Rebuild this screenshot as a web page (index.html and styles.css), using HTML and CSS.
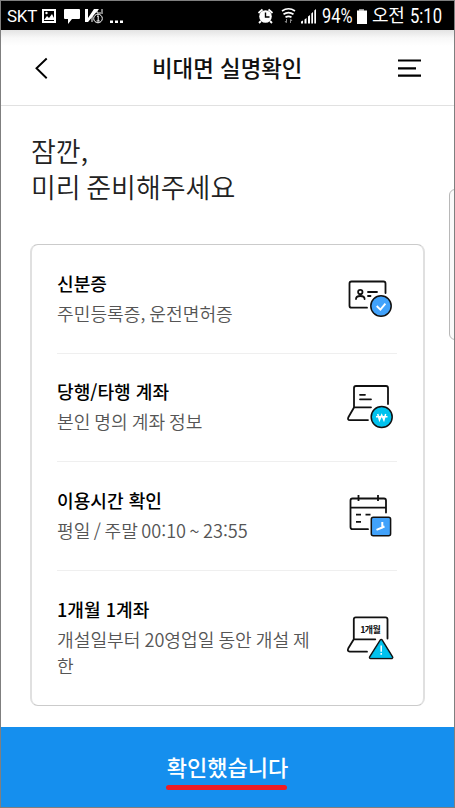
FILE: index.html
```html
<!DOCTYPE html>
<html lang="ko">
<head>
<meta charset="utf-8">
<title>비대면 실명확인</title>
<link rel="stylesheet" href="styles.css">
</head>
<body>
<div class="screen">
  <div class="status">
    <span class="carrier">SKT</span>
    <svg class="notices" width="84" height="20" viewBox="40 5 84 20">
      <path fill="#fff" fill-rule="evenodd" d="M42 8h14v14H42zM44 10v10h10V10z"/>
      <path fill="#fff" d="M44 19l3-4 2 2 3-4 3 6z"/><circle cx="46.5" cy="12" r="1.2" fill="#fff"/>
      <path fill="#fff" d="M65 8h14q1 0 1 1v8q0 1-1 1h-7l-4 5v-5h-3q-1 0-1-1V9q0-1 1-1z"/>
      <path fill="#fff" d="M85 8h3v9l6-9h5L88 21h-3z"/>
      <circle cx="98" cy="17.5" r="4.3" fill="#000" stroke="#fff"/><path d="M97 15.5l1.2-.8v5.500M96.500 20h3.300M92 15v6M97 9v3h4M102 8v5" fill="none" stroke="#fff"/>
      <path fill="#fff" d="M110 19.500h3v2.500h-3zM115 19.500h3v2.500h-3zM120 19.500h3v2.500h-3z"/>
    </svg>
    <svg class="signals" width="62" height="20" viewBox="256 5 62 20">
      <circle cx="265.500" cy="15.500" r="6.300" fill="#fff"/>
      <path d="M258.500 12l4-3.500M272.500 12l-4-3.500M261 20l-2 2M270 20l2 2" stroke="#fff" stroke-width="1.800"/>
      <path d="M265.500 11.500v4.500h4" stroke="#000" stroke-width="1.400" fill="none"/>
      <g fill="none" stroke="#fff" stroke-width="1.700"><path d="M282 10q6.500-4.500 13 0M283.500 13.300q5-3.500 10 0M285.500 16.300q3-2 6 0"/></g>
      <path d="M286.500 18v3.500m-1.500-1.500l1.500 2M290.500 22v-3.500m1.500 1.500l-1.500-2" stroke="#888" fill="none"/>
      <path fill="#fff" d="M301 22.500v-2l2-1v3zM304.500 22.500v-4l2-1.500v5.500zM308 22.500v-7l2-1.500v8.500zM311.300 22.500v-10l1.700-1.500v11.500zM314.300 22.500v-13l1.700-1.500v14.500z"/>
    </svg>
    <span class="percent">94%</span>
    <svg class="battery" width="12" height="18" viewBox="356 6 12 18"><path fill="#999" d="M359 8h5v2h-5z"/><path fill="#fff" d="M357 9.500h10V23H357z"/></svg>
    <span class="clock"><span class="ampm">오전</span><span class="time">5:10</span></span>
  </div>

  <div class="header">
    <svg width="14" height="24" viewBox="34 56 14 24"><path d="M46.700 58.500L36.500 68.300l10.200 9.900" fill="none" stroke="#000" stroke-width="1.900"/></svg>
    <h1 class="title">비대면 실명확인</h1>
    <svg width="24" height="22" viewBox="398 57 24 22"><path d="M398 60.500h23M398 68.300h18M398 75.700h23" stroke="#000" stroke-width="2.200"/></svg>
  </div>

  <div class="content">
    <h2 class="lead">잠깐,<br>미리 준비해주세요</h2>
    <div class="card">
      <div class="row">
        <div class="text"><div class="name">신분증</div><div class="desc">주민등록증, 운전면허증</div></div>
        <svg class="icon" viewBox="345 273 52 52">
          <g fill="none" stroke="#111" stroke-width="1.800" stroke-linecap="round">
            <path d="M385.500 293v-9.500q0-2-2-2h-32q-2 0-2 2v22.200q0 2 2 2H367"/>
            <circle cx="360.300" cy="292" r="2.200"/><path d="M356 299q0-3 4.300-3t4.300 3M368 292h9M368 296h2.500"/>
          </g>
          <circle cx="381" cy="306" r="10.200" fill="#41a2fb" stroke="#111" stroke-width="1.500"/>
          <path d="M376.700 306l3.700 3.600 5-6" fill="none" stroke="#fff" stroke-width="1.900"/>
        </svg>
      </div>
      <div class="row">
        <div class="text"><div class="name">당행/타행 계좌</div><div class="desc">본인 명의 계좌 정보</div></div>
        <svg class="icon" viewBox="345 381.500 52 52">
          <g fill="none" stroke="#111" stroke-width="1.800" stroke-linecap="round" stroke-linejoin="round">
            <path d="M388 404.500v-16q0-2-2-2h-30q-2 0-2 2v19.300H371M354 408l-5.500 9.500q-1.500 3 1.500 3.100H368M360 395.300h5M360 399.800h11"/>
          </g>
          <circle cx="381.700" cy="417.500" r="10.500" fill="#00c2ee" stroke="#111" stroke-width="1.500"/>
          <path d="M377.700 414.500l1.800 6 2.200-5 2.200 5 1.800-6M376 417.200h11.500" fill="none" stroke="#fff" stroke-width="1.500"/>
        </svg>
      </div>
      <div class="row">
        <div class="text"><div class="name">이용시간 확인</div><div class="desc desc-hours">평일 / 주말 00:10 ~ 23:55</div></div>
        <svg class="icon" viewBox="345 490 52 52">
          <g fill="none" stroke="#111" stroke-width="1.800">
            <path stroke-linecap="round" d="M386 512.500v-12q0-2-2-2h-31.500q-2 0-2 2V527q0 2.200 2 2.200H368"/>
            <path d="M350.500 507.700H386M358.500 495v6M378 495v6M356 514.600h5M365.500 514.600h5M356 521.800h5"/>
          </g>
          <rect x="371.300" y="517.200" width="19.300" height="18.600" rx="2" fill="#41a2fb" stroke="#111" stroke-width="1.500"/>
          <path d="M382.300 522v5.500l-5.800 2.400M382 527.500l2.500-1" fill="none" stroke="#fff" stroke-width="2"/>
        </svg>
      </div>
      <div class="row">
        <div class="text"><div class="name">1개월 1계좌</div><div class="desc">개설일부터 20영업일 동안 개설 제한</div></div>
        <svg class="icon" viewBox="345 612 52 52">
          <g fill="none" stroke="#111" stroke-width="1.800" stroke-linecap="round" stroke-linejoin="round">
            <path d="M387.500 638.500v-19.200q0-2-2-2h-29.700q-2 0-2 2v20h21.500M353.800 639.300l-5.500 9q-1.500 3 1.500 3.400H367"/>
          </g>
          <text class="icon-label" x="360.200" y="632.500" textLength="20.500">1개월</text>
          <path d="M381.200 640.500l10.500 17H370.500z" fill="#111" stroke="#111" stroke-width="3.500" stroke-linejoin="round"/>
          <path d="M381.200 640.500l10.500 17H370.500z" fill="#00c2ee" stroke="#00c2ee" stroke-width=".8" stroke-linejoin="round"/>
          <path d="M381.200 645.500v6.200M381.200 653v1.800" stroke="#fff" stroke-width="1.500"/>
        </svg>
      </div>
    </div>
  </div>
  <div class="confirm"><span class="confirm-label">확인했습니다</span></div>
  <div class="edge-handle"></div>
</div>
</body>
</html>
```

FILE: styles.css
```css
* { box-sizing: border-box; }
body { margin: 0; background: #fff; font-family: "Noto Sans CJK KR", sans-serif; }
.screen {
  position: relative; width: 455px; height: 808px; overflow: hidden;
  border: 1px solid #7f7f7f; display: flex; flex-direction: column;
}
.status {
  height: 29px; flex: none; background: #000; color: #fff; display: flex; align-items: center;
  padding: 0 12px 0 6px; font-family: Roboto, "Noto Sans CJK KR", sans-serif; font-size: 17px; white-space: nowrap;
}
.carrier { width: 33px; font-size: 17px; letter-spacing: -.3px; }
.signals { margin-left: auto; }
.percent { width: 31px; margin-left: 4px; font-size: 20px; transform: scaleX(.82); transform-origin: left; }
.battery { margin-left: 3px; }
.clock { margin-left: 4px; width: 70px; display: flex; align-items: center; gap: 6px; }
.ampm { font-size: 18px; line-height: 26px; letter-spacing: -.4px; }
.time { font-size: 20px; line-height: 26px; transform: scaleX(.83); transform-origin: left; }
.header {
  height: 76px; flex: none; display: flex; align-items: center;
  padding: 0 32px 0 33px; border-bottom: 1px solid #e1e1e1;
  background: linear-gradient(#e3e3e3, #f8f8f8 8px, #fff 16px);
}
.title { margin: -2px auto 0 104px; font-size: 22.400px; font-weight: 500; line-height: 32px; color: #111; }
.content { flex: 1; padding: 27px 30px 0; }
.lead { margin: 0; font-size: 27px; line-height: 36px; font-weight: 350; color: #222; word-spacing: -2px; }
.card {
  margin: 39px 0 0 -1px; width: 395px; height: 462px; border: 1px solid #cbcbcb;
  border-left: 2px solid #e0e0e0; border-right: 2px solid #e0e0e0; border-radius: 8px; padding: 0 26px 0 25px;
}
.row { display: flex; align-items: center; justify-content: space-between; height: 108.600px; border-bottom: 1px solid #efefef; }
.row:last-child { height: 134px; border-bottom: 0; }
.text { width: 264px; padding-bottom: 2px; }
.name { font-size: 18.100px; line-height: 26px; font-weight: 500; color: #000; }
.desc { margin-top: 4px; font-size: 18.150px; line-height: 26px; font-weight: 350; color: #555; word-spacing: -1.100px; }
.desc-hours { word-spacing: -1.600px; }
.icon { width: 52px; height: 52px; flex: none; }
.icon-label { font-size: 9px; font-weight: 700; fill: #111; }
.confirm { height: 80px; flex: none; background: #158fee; color: #fff; display: flex; justify-content: center; align-items: center; }
.confirm-label { position: relative; top: -1px; font-size: 22px; line-height: 32px; font-weight: 500; }
.confirm-label::after {
  content: ""; position: absolute; left: -1px; bottom: -8px; width: 121px; height: 5px;
  border-radius: 3px; background: #ed1c24;
}
.edge-handle {
  position: absolute; right: -2px; top: 188px; width: 7px; height: 151px; background: #fafafa;
  border: 1px solid #b8b8b8; border-radius: 6px 0 0 6px;
}
```
